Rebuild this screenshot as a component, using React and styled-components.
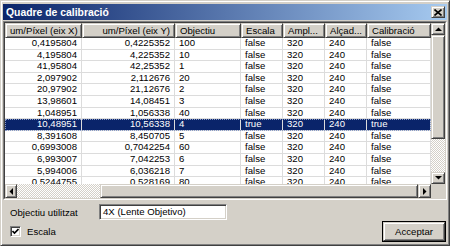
import React from 'react'
import styled, { createGlobalStyle, css } from 'styled-components'

const FACE = '#d4d0c8'
const LINE = '#dcdcdc'

const GlobalStyle = createGlobalStyle`
  html, body {
    margin: 0;
    padding: 0;
    background: ${FACE};
  }
  body {
    font-family: "Liberation Sans", Arial, sans-serif;
    font-size: 9.6px;
    color: #000;
  }
`

const raised = css`
  background: ${FACE};
  border: 1px solid;
  border-color: ${FACE} #404040 #404040 ${FACE};
  box-shadow: inset 1px 1px #fff, inset -1px -1px #808080;
  box-sizing: border-box;
`

const sunken = css`
  border: 1px solid;
  border-color: #808080 #fff #fff #808080;
  box-shadow: inset 1px 1px #404040, inset -1px -1px ${FACE};
  box-sizing: border-box;
  background: #fff;
`

const checker = css`
  background: repeating-conic-gradient(#fff 0 25%, ${FACE} 0 50%) 0 0 / 2px 2px;
`

const columns = [
  { key: 'x', title: 'um/Píxel (eix X)', width: 77, align: 'right' },
  { key: 'y', title: 'um/Píxel (eix Y)', width: 93, align: 'right' },
  { key: 'obj', title: 'Objectiu', width: 66 },
  { key: 'esc', title: 'Escala', width: 42 },
  { key: 'w', title: 'Ampl...', width: 42 },
  { key: 'h', title: 'Alçad...', width: 42 },
  { key: 'cal', title: 'Calibració', width: 64 },
]

const rows = [
  ['0,4195804', '0,4225352', '100'],
  ['4,195804', '4,225352', '10'],
  ['41,95804', '42,25352', '1'],
  ['2,097902', '2,112676', '20'],
  ['20,97902', '21,12676', '2'],
  ['13,98601', '14,08451', '3'],
  ['1,048951', '1,056338', '40'],
  ['10,48951', '10,56338', '4', true],
  ['8,391608', '8,450705', '5'],
  ['0,6993008', '0,7042254', '60'],
  ['6,993007', '7,042253', '6'],
  ['5,994006', '6,036218', '7'],
  ['0,5244755', '0,528169', '80'],
]

const gridCols = columns.map(c => `${c.width}px`).join(' ')

function Arrow({ dir }) {
  const pts = {
    up: '0,4 7,4 3.5,0.5',
    down: '0,0 7,0 3.5,3.5',
    left: '4,0 4,7 0.5,3.5',
    right: '0,0 0,7 3.5,3.5',
  }[dir]
  const vertical = dir === 'up' || dir === 'down'
  return (
    <svg width={vertical ? 7 : 4} height={vertical ? 4 : 7} viewBox={vertical ? '0 0 7 4' : '0 0 4 7'}>
      <polygon points={pts} fill="#000" />
    </svg>
  )
}

export default function App() {
  return (
    <>
      <GlobalStyle />
      <Window>
        <TitleBar>
          <Title>Quadre de calibració</Title>
          <CloseButton>
            <svg width="8" height="7" viewBox="0 0 8 7">
              <path d="M0.5 0.5 L7.5 6.5 M7.5 0.5 L0.5 6.5" stroke="#000" strokeWidth="1.6" />
            </svg>
          </CloseButton>
        </TitleBar>

        <GridFrame>
          <GridInner>
            <Viewport>
              <HeaderRow>
                {columns.map(c => (
                  <HeaderCell key={c.key} $align={c.align}>{c.title}</HeaderCell>
                ))}
              </HeaderRow>
              {rows.map(([x, y, obj, sel]) => {
                const flag = sel ? 'true' : 'false'
                const values = [x, y, obj, flag, '320', '240', flag]
                return (
                  <Row key={x} $selected={sel}>
                    {values.map((v, i) => (
                      <Cell key={i} $align={columns[i].align}>{v}</Cell>
                    ))}
                  </Row>
                )
              })}
            </Viewport>

            <VScroll>
              <ScrollButton $h={12}><Arrow dir="up" /></ScrollButton>
              <Thumb style={{ height: 104 }} />
              <Track />
              <ScrollButton $h={12}><Arrow dir="down" /></ScrollButton>
            </VScroll>

            <HScroll>
              <ScrollButton $w={12}><Arrow dir="left" /></ScrollButton>
              <Track style={{ flex: '0 0 83px' }} />
              <Thumb style={{ flex: 1 }} />
              <ScrollButton $w={13}><Arrow dir="right" /></ScrollButton>
            </HScroll>

            <Corner />
          </GridInner>
        </GridFrame>

        <Footer>
          <Fields>
            <FieldRow>
              <Label>Objectiu utilitzat</Label>
              <TextInput>4X (Lente Objetivo)</TextInput>
            </FieldRow>
            <CheckRow>
              <CheckBox>
                <svg width="7" height="7" viewBox="0 0 7 7">
                  <path d="M0.5 3 L2.5 5 L6.5 1" stroke="#000" strokeWidth="1.6" fill="none" />
                </svg>
              </CheckBox>
              <span>Escala</span>
            </CheckRow>
          </Fields>
          <DefaultButton>
            <ButtonFace>Acceptar</ButtonFace>
          </DefaultButton>
        </Footer>
      </Window>
    </>
  )
}

const Window = styled.div`
  width: 450px;
  height: 246px;
  box-sizing: border-box;
  display: flex;
  flex-direction: column;
  background: ${FACE};
  border: 1px solid;
  border-color: ${FACE} #404040 #404040 ${FACE};
  box-shadow: inset 1px 1px #fff, inset -1px -1px #808080;
  padding: 3px 2px 2px;
`

const TitleBar = styled.div`
  height: 16px;
  flex: none;
  display: flex;
  align-items: center;
  justify-content: space-between;
  padding: 0 2px 0 3px;
  background: linear-gradient(to right, #0a246a, #a6caf0);
`

const Title = styled.span`
  color: #fff;
  font-weight: bold;
  font-size: 10.4px;
`

const CloseButton = styled.div`
  ${raised};
  width: 14px;
  height: 12px;
  display: flex;
  align-items: center;
  justify-content: center;
`

const GridFrame = styled.div`
  margin-top: 1px;
  height: 179px;
  flex: none;
  box-sizing: border-box;
  border: 1px solid;
  border-color: #808080 #fff #fff #808080;
`

const GridInner = styled.div`
  height: 100%;
  box-sizing: border-box;
  border: 1px solid;
  border-color: #404040 ${FACE} ${FACE} #404040;
  display: grid;
  grid-template-columns: 1fr 14px;
  grid-template-rows: 1fr 14px;
  background: #fff;
`

const Viewport = styled.div`
  overflow: hidden;
  background: #fff;
`

const HeaderRow = styled.div`
  display: grid;
  grid-template-columns: ${gridCols};
  height: 15px;
`

const HeaderCell = styled.div`
  ${raised};
  padding: 0 4px;
  line-height: 13px;
  text-align: ${p => (p.$align === 'right' ? 'right' : 'left')};
  white-space: nowrap;
  overflow: hidden;
`

const Row = styled.div`
  display: grid;
  grid-template-columns: ${gridCols};
  height: 11.6px;
  box-sizing: border-box;
  border-bottom: 1px solid ${LINE};
  background: ${p => (p.$selected ? '#0a246a' : '#fff')};
  color: ${p => (p.$selected ? '#fff' : '#000')};
  outline: ${p => (p.$selected ? '1px dotted #8a9cc8' : 'none')};
  outline-offset: -1px;
`

const Cell = styled.div`
  border-right: 1px solid ${LINE};
  padding: 0 4px 0 4px;
  line-height: 10.6px;
  white-space: nowrap;
  overflow: hidden;
  text-align: ${p => (p.$align === 'right' ? 'right' : 'left')};
`

const VScroll = styled.div`
  display: flex;
  flex-direction: column;
  ${checker};
`

const HScroll = styled.div`
  display: flex;
  ${checker};
`

const ScrollButton = styled.div`
  ${raised};
  flex: none;
  width: ${p => (p.$w ? `${p.$w}px` : 'auto')};
  height: ${p => (p.$h ? `${p.$h}px` : 'auto')};
  display: flex;
  align-items: center;
  justify-content: center;
`

const Thumb = styled.div`
  ${raised};
  flex: none;
`

const Track = styled.div`
  flex: 1;
`

const Corner = styled.div`
  background: ${FACE};
`

const Footer = styled.div`
  flex: 1;
  display: flex;
  justify-content: space-between;
  align-items: flex-end;
  padding: 0 1px 0 4px;
`

const Fields = styled.div`
  align-self: stretch;
  display: flex;
  flex-direction: column;
  padding-top: 4px;
`

const FieldRow = styled.div`
  display: flex;
  align-items: center;
`

const Label = styled.span`
  width: 89px;
  padding-left: 3px;
`

const TextInput = styled.div`
  ${sunken};
  width: 128px;
  height: 16px;
  padding: 0 3px;
  line-height: 14px;
`

const CheckRow = styled.div`
  display: flex;
  align-items: center;
  gap: 6px;
  margin-top: 6px;
  padding-left: 3px;
`

const CheckBox = styled.div`
  ${sunken};
  width: 11px;
  height: 11px;
  display: flex;
  align-items: center;
  justify-content: center;
`

const DefaultButton = styled.div`
  width: 64px;
  height: 21px;
  box-sizing: border-box;
  border: 1px solid #000;
  margin-bottom: 1px;
`

const ButtonFace = styled.div`
  ${raised};
  height: 100%;
  display: flex;
  align-items: center;
  justify-content: center;
`
